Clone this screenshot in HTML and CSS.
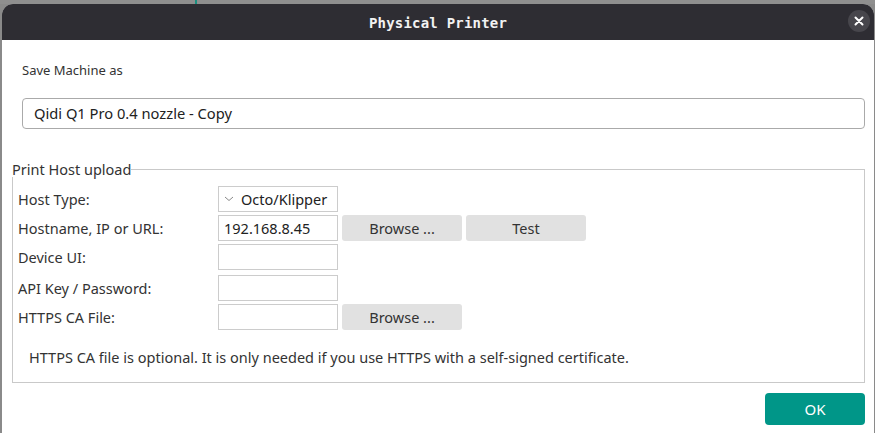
FILE: index.html
```html
<!DOCTYPE html>
<html>
<head>
<meta charset="utf-8">
<link rel="stylesheet" href="styles.css">
</head>
<body>
<div class="backdrop"><span class="teal-mark"></span></div>
<div class="dialog">
  <div class="titlebar">
    <span class="title">Physical Printer</span>
    <span class="close"><svg width="10" height="10" viewBox="0 0 10 10"><path d="M1.5 1.5 L8.5 8.5 M8.5 1.5 L1.5 8.5" stroke="#fff" stroke-width="2" stroke-linecap="round"/></svg></span>
  </div>
  <div class="content">
    <div class="save-label">Save Machine as</div>
    <div class="name-input">Qidi Q1 Pro 0.4 nozzle - Copy</div>
    <fieldset class="group">
      <legend>Print Host upload</legend>
      <div class="grid">
        <div class="lbl">Host Type:</div>
        <div class="row"><div class="field combo"><svg width="10" height="6" viewBox="0 0 10 6"><path d="M1 1 L5 4.5 L9 1" stroke="#888" stroke-width="1" fill="none"/></svg>Octo/Klipper</div></div>
        <div class="lbl">Hostname, IP or URL:</div>
        <div class="row"><div class="field">192.168.8.45</div><div class="btn">Browse ...</div><div class="btn">Test</div></div>
        <div class="lbl">Device UI:</div>
        <div class="row"><div class="field"></div></div>
        <div class="lbl shift">API Key / Password:</div>
        <div class="row shift"><div class="field"></div></div>
        <div class="lbl">HTTPS CA File:</div>
        <div class="row"><div class="field"></div><div class="btn">Browse ...</div></div>
      </div>
      <div class="note">HTTPS CA file is optional. It is only needed if you use HTTPS with a self-signed certificate.</div>
    </fieldset>
    <div class="footer"><div class="ok">OK</div></div>
  </div>
</div>
</body>
</html>
```

FILE: styles.css
```css
html, body {
  margin: 0;
  padding: 0;
  width: 875px;
  height: 433px;
  overflow: hidden;
  background: #8a8a8a;
  font-family: "Noto Sans", "DejaVu Sans", sans-serif;
}
.backdrop {
  position: absolute;
  left: 0;
  top: 0;
  width: 875px;
  height: 4px;
  background: #8f8f8f;
}
.teal-mark {
  position: absolute;
  left: 195px;
  top: 0;
  width: 2px;
  height: 4px;
  background: #1a8f80;
}
.dialog {
  position: relative;
  margin: 4px 0 0 2px;
  width: 872px;
  height: 429px;
  background: #fff;
  border-radius: 11px 11px 0 0;
  overflow: hidden;
}
.titlebar {
  height: 36px;
  background: #2e2d33;
  display: flex;
  align-items: center;
  justify-content: center;
  position: relative;
}
.title {
  font-family: "DejaVu Sans Mono", monospace;
  font-weight: bold;
  font-size: 14px;
  color: #f2f2f2;
  letter-spacing: 0.2px;
  margin-top: 1px;
}
.close {
  position: absolute;
  right: 4px;
  top: 6px;
  width: 22px;
  height: 22px;
  border-radius: 50%;
  background: #47464c;
  display: flex;
  align-items: center;
  justify-content: center;
}
.content {
  padding: 0 9px 0 10px;
}
.save-label {
  font-size: 13px;
  color: #333;
  margin: 21px 0 0 10px;
  line-height: 18px;
}
.name-input {
  margin: 19px 0 0 10px;
  width: 830px;
  height: 29px;
  border: 1px solid #aaa;
  border-radius: 4px;
  padding-left: 11px;
  font-size: 14.7px;
  line-height: 29px;
  color: #222;
}
.group {
  margin: 32px 0 0 0;
  width: 853px;
  height: 222px;
  border: 1px solid #c9c9c9;
  padding: 0;
  box-sizing: border-box;
}
.group legend {
  padding: 0;
  margin-left: -1px;
  font-size: 14.5px;
  color: #333;
  line-height: 16px;
}
.grid {
  display: grid;
  grid-template-columns: 200px auto;
  row-gap: 3px;
  margin: 9px 0 0 5px;
  align-items: center;
}
.lbl {
  font-size: 14.5px;
  color: #333;
}
.shift {
  margin-top: 2px;
}
.row {
  display: flex;
  gap: 4px;
}
.field {
  width: 120px;
  height: 26px;
  box-sizing: border-box;
  border: 1px solid #ccc;
  font-size: 14.5px;
  color: #222;
  line-height: 24px;
  padding-left: 5px;
}
.combo {
  display: flex;
  align-items: center;
  gap: 7px;
}
.btn {
  width: 120px;
  height: 26px;
  background: #e1e1e1;
  border-radius: 3px;
  font-size: 14.5px;
  color: #333;
  text-align: center;
  line-height: 26px;
}
.note {
  font-size: 14.5px;
  color: #333;
  margin: 17px 0 0 16px;
}
.footer {
  display: flex;
  justify-content: flex-end;
  margin-top: 10px;
}
.ok {
  width: 100px;
  height: 32px;
  background: #009688;
  border-radius: 4px;
  color: #fff;
  font-size: 15px;
  text-align: center;
  line-height: 32px;
}
```
